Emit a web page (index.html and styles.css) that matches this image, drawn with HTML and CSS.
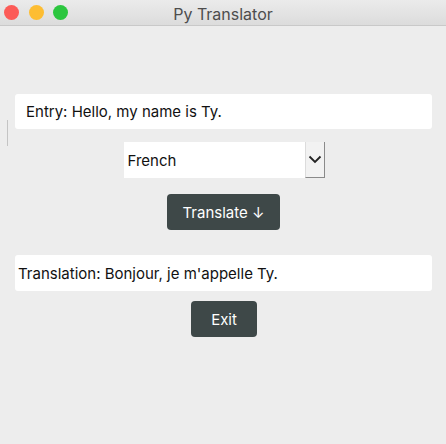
FILE: index.html
```html
<!DOCTYPE html>
<html>
<head>
<meta charset="utf-8">
<link rel="stylesheet" href="styles.css">
</head>
<body>
<div class="window">
  <div class="titlebar">
    <div class="lights">
      <span class="light red"></span>
      <span class="light yellow"></span>
      <span class="light green"></span>
    </div>
    <div class="title">Py Translator</div>
  </div>
  <div class="content">
    <div class="field entry">Entry: Hello, my name is Ty.</div>
    <div class="select-row">
      <span class="tick"></span>
      <div class="select">
        <div class="select-value">French</div>
        <div class="select-arrow">
          <svg width="14" height="9" viewBox="0 0 14 9"><path d="M1.5 1.5 L7 7 L12.5 1.5" fill="none" stroke="#222" stroke-width="1.8"/></svg>
        </div>
      </div>
    </div>
    <button class="btn translate">Translate ↓</button>
    <div class="field translation">Translation: Bonjour, je m'appelle Ty.</div>
    <button class="btn exit">Exit</button>
  </div>
</div>
</body>
</html>
```

FILE: styles.css
```css
html, body {
  margin: 0;
  padding: 0;
  background: #ededed;
  font-family: Inter, "Liberation Sans", sans-serif;
}
.window {
  width: 446px;
  height: 444px;
  background: #ededed;
  display: flex;
  flex-direction: column;
}
.titlebar {
  height: 26px;
  background: linear-gradient(#ebebeb, #dcdcdc);
  border-bottom: 1px solid #c9c9c9;
  box-sizing: border-box;
  position: relative;
  display: flex;
  align-items: center;
  justify-content: center;
}
.lights {
  position: absolute;
  left: 4px;
  top: 5px;
  display: flex;
  gap: 9.5px;
}
.light {
  width: 15px;
  height: 15px;
  border-radius: 50%;
  display: block;
}
.red { background: #fc5b57; }
.yellow { background: #fdbd32; }
.green { background: #2cc63f; }
.title {
  font-size: 16px;
  color: #4d4d4d;
  padding-top: 2px;
}
.content {
  display: flex;
  flex-direction: column;
  align-items: center;
  padding: 68px 14px 0 15px;
}
.field {
  align-self: stretch;
  background: #fff;
  border-radius: 3px;
  height: 35px;
  box-sizing: border-box;
  padding-left: 11px;
  display: flex;
  align-items: center;
  font-size: 15px;
  color: #111;
}
.translation {
  height: 36px;
  padding-left: 3px;
  margin-top: 25px;
}
.select-row {
  position: relative;
  align-self: stretch;
  display: flex;
  justify-content: center;
  margin-top: 13px;
  padding-left: 17px;
}
.tick {
  position: absolute;
  left: -8px;
  top: -22px;
  width: 1px;
  height: 26px;
  background: #c4c4c4;
}
.select {
  display: flex;
  height: 36px;
  width: 201px;
  margin-left: -16px;
}
.select-value {
  flex: 1;
  background: #fff;
  display: flex;
  align-items: center;
  padding-left: 4px;
  font-size: 15px;
  color: #111;
}
.select-arrow {
  width: 18px;
  background: #f2f2f2;
  border-right: 1px solid #8a8a8a;
  border-bottom: 1px solid #8a8a8a;
  border-left: 1px solid #dcdcdc;
  display: flex;
  align-items: center;
  justify-content: center;
}
.btn {
  background: #3e4848;
  color: #fff;
  border: none;
  border-radius: 4px;
  font-family: Inter, "Liberation Sans", sans-serif;
  font-size: 15px;
  height: 36px;
  padding: 0;
}
.translate {
  width: 113px;
  margin-top: 16px;
}
.exit {
  width: 66px;
  margin-top: 10px;
  margin-left: 1px;
}
```
